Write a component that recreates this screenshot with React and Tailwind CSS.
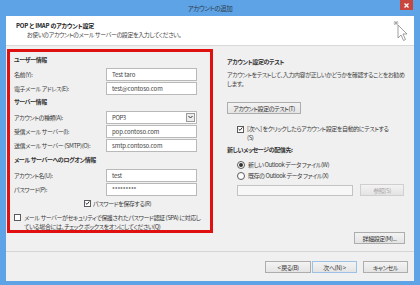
import React from "react";

// small bits of the Windows dialog
const CheckBox = ({ checked }) => (
  <span className="inline-flex items-center justify-center w-[7px] h-[7px] border border-[#5a5a5a] bg-white shrink-0">
    {checked && (
      <svg width="6" height="6" viewBox="0 0 6 6">
        <path d="M0.8 3 L2.4 4.6 L5.2 1.2" fill="none" stroke="#222" strokeWidth="1.1" />
      </svg>
    )}
  </span>
);

const Radio = ({ checked }) => (
  <span className="inline-flex items-center justify-center w-[8px] h-[8px] rounded-full border border-[#5a5a5a] bg-white shrink-0">
    {checked && <span className="w-[4px] h-[4px] rounded-full bg-[#333]" />}
  </span>
);

const Field = ({ label, value }) => (
  <div className="flex items-center h-[14px]">
    <span className="w-[92px] shrink-0 whitespace-nowrap">{label}</span>
    <div className="w-[91px] h-[13px] border border-[#b9b9b9] bg-white pl-[5px] flex items-center text-[#444] tracking-[-0.1px]">
      {value}
    </div>
  </div>
);

const Heading = ({ children, className = "" }) => (
  <div className={`h-[12px] flex items-center font-bold text-[#333] whitespace-nowrap ${className}`}>{children}</div>
);

const Button = ({ children, className = "", disabled }) => (
  <div
    className={`h-[12px] flex items-center justify-center whitespace-nowrap border bg-gradient-to-b from-[#f3f3f3] to-[#e4e4e4] ${
      disabled ? "border-[#cfcfcf] text-[#a8a8a8]" : "border-[#adadad] text-[#333]"
    } ${className}`}
  >
    {children}
  </div>
);

export default function App() {
  return (
    <div className="w-[420px] h-[285px] bg-[#5da3e6] flex flex-col overflow-hidden relative text-[6px] tracking-[-0.4px] leading-[9px] text-[#3a3a3a] font-['Noto_Sans_CJK_JP',sans-serif] [font-feature-settings:'palt']">
      {/* title bar */}
      <div className="h-[16px] shrink-0 flex items-center justify-center relative">
        <span className="text-[#2f3b4a] text-[6.5px]">アカウントの追加</span>
        <div className="absolute right-[7px] top-0 w-[13px] h-[10px] bg-[#c7463e] flex items-center justify-center">
          <svg width="5" height="5" viewBox="0 0 5 5">
            <path d="M0.5 0.5 L4.5 4.5 M4.5 0.5 L0.5 4.5" stroke="#fff" strokeWidth="1.3" />
          </svg>
        </div>
      </div>

      <div className="flex-1 mx-[6px] mb-[4px] flex flex-col bg-[#f0f0f0]">
        {/* header */}
        <div className="h-[30px] shrink-0 bg-white border-b border-[#d9d9d9] pl-[10px] pt-[5px] relative">
          <div className="font-bold text-[#222] leading-[9px] tracking-[-0.2px]">POP と IMAP のアカウント設定</div>
          <div className="pl-[11px] text-[#444] leading-[9px]">お使いのアカウントのメール サーバーの設定を入力してください。</div>
          <svg className="absolute right-[4px] top-[4px]" width="18" height="22" viewBox="0 0 18 22">
            <g stroke="#999" strokeWidth="0.7">
              <path d="M4 1 V5 M1.5 3 H6.5 M2 1.2 L6 4.8 M6 1.2 L2 4.8" />
            </g>
            <path d="M6 5 L6 18 L9 15 L11.5 20.5 L13.5 19.5 L11 14 L15 14 Z" fill="#fff" stroke="#888" strokeWidth="0.8" strokeLinejoin="round" />
          </svg>
        </div>

        {/* body */}
        <div className="h-[205px] shrink-0 flex">
          <div className="ml-[1px] mt-[3px] w-[206px] h-[184px] border-[3px] border-[#e01010] pl-[4px] pt-[1px]">
            <Heading className="mb-[2px]">ユーザー情報</Heading>
            <Field label="名前(Y):" value="Test taro" />
            <Field label="電子メール アドレス(E):" value="test@contoso.com" />
            <Heading className="mb-[3px]">サーバー情報</Heading>
            <div className="flex items-center h-[14px]">
              <span className="w-[92px] shrink-0 whitespace-nowrap">アカウントの種類(A):</span>
              <div className="w-[91px] h-[13px] border border-[#b9b9b9] bg-white pl-[5px] flex items-center justify-between text-[#444]">
                <span>POP3</span>
                <span className="w-[9px] h-[9px] mr-[1px] border border-[#9a9a9a] bg-[#ececec] flex items-center justify-center">
                  <svg width="5" height="4" viewBox="0 0 5 4">
                    <path d="M0.5 1 L2.5 3 L4.5 1" fill="none" stroke="#333" strokeWidth="1" />
                  </svg>
                </span>
              </div>
            </div>
            <Field label="受信メール サーバー(I):" value="pop.contoso.com" />
            <Field label="送信メール サーバー (SMTP)(O):" value="smtp.contoso.com" />
            <Heading className="mt-[1px] mb-[3px]">メール サーバーへのログオン情報</Heading>
            <Field label="アカウント名(U):" value="test" />
            <Field label="パスワード(P):" value="*********" />
            <div className="h-[12px] flex items-center gap-[2px] pl-[70px] mt-[1px]">
              <CheckBox checked />
              <span>パスワードを保存する(R)</span>
            </div>
            <div className="flex gap-[3px] mt-[4px]">
              <span className="mt-[1px]">
                <CheckBox />
              </span>
              <span className="leading-[9px] whitespace-nowrap">
                メール サーバーがセキュリティで保護されたパスワード認証 (SPA) に対応し
                <br />
                ている場合には、チェック ボックスをオンにしてください(Q)
              </span>
            </div>
          </div>

          <div className="ml-[14px] w-[178px] pt-[11px] flex flex-col">
            <div className="text-[#333] font-semibold">アカウント設定のテスト</div>
            <div className="mt-[4px] text-[#444] whitespace-nowrap">
              アカウントをテストして、入力内容が正しいかどうかを確認することをお勧め
              <br />
              します。
            </div>
            <Button className="mt-[14px] w-[74px]">アカウント設定のテスト(T)</Button>
            <div className="mt-[10px] pl-[10px] flex gap-[3px]">
              <span className="mt-[1px]">
                <CheckBox checked />
              </span>
              <span className="whitespace-nowrap">
                [次へ] をクリックしたらアカウント設定を自動的にテストする
                <br />
                (S)
              </span>
            </div>
            <div className="mt-[3px] font-bold text-[#333]">新しいメッセージの配信先:</div>
            <div className="mt-[6px] pl-[10px] flex items-center gap-[3px]">
              <Radio checked />
              <span>新しい Outlook データ ファイル(W)</span>
            </div>
            <div className="mt-[2px] pl-[10px] flex items-center gap-[3px]">
              <Radio />
              <span>既存の Outlook データ ファイル(X)</span>
            </div>
            <div className="mt-[4px] pl-[10px] flex items-center gap-[7px]">
              <div className="w-[116px] h-[11px] border border-[#c3c3c3] bg-[#f7f7f7]" />
              <Button disabled className="w-[44px]">参照(S)</Button>
            </div>
            <div className="mt-[36px] flex justify-end">
              <Button className="w-[51px]">詳細設定(M)...</Button>
            </div>
          </div>
        </div>

        {/* footer */}
        <div className="flex-1 border-t border-[#d5d5d5] flex justify-end items-start pt-[9px] pr-[6px]">
          <Button className="w-[46px]">&lt; 戻る(B)</Button>
          <Button className="w-[45px] ml-[1px] !border-[#9cc0e6]">次へ(N) &gt;</Button>
          <Button className="w-[45px] ml-[6px]">キャンセル</Button>
        </div>
      </div>
    </div>
  );
}
